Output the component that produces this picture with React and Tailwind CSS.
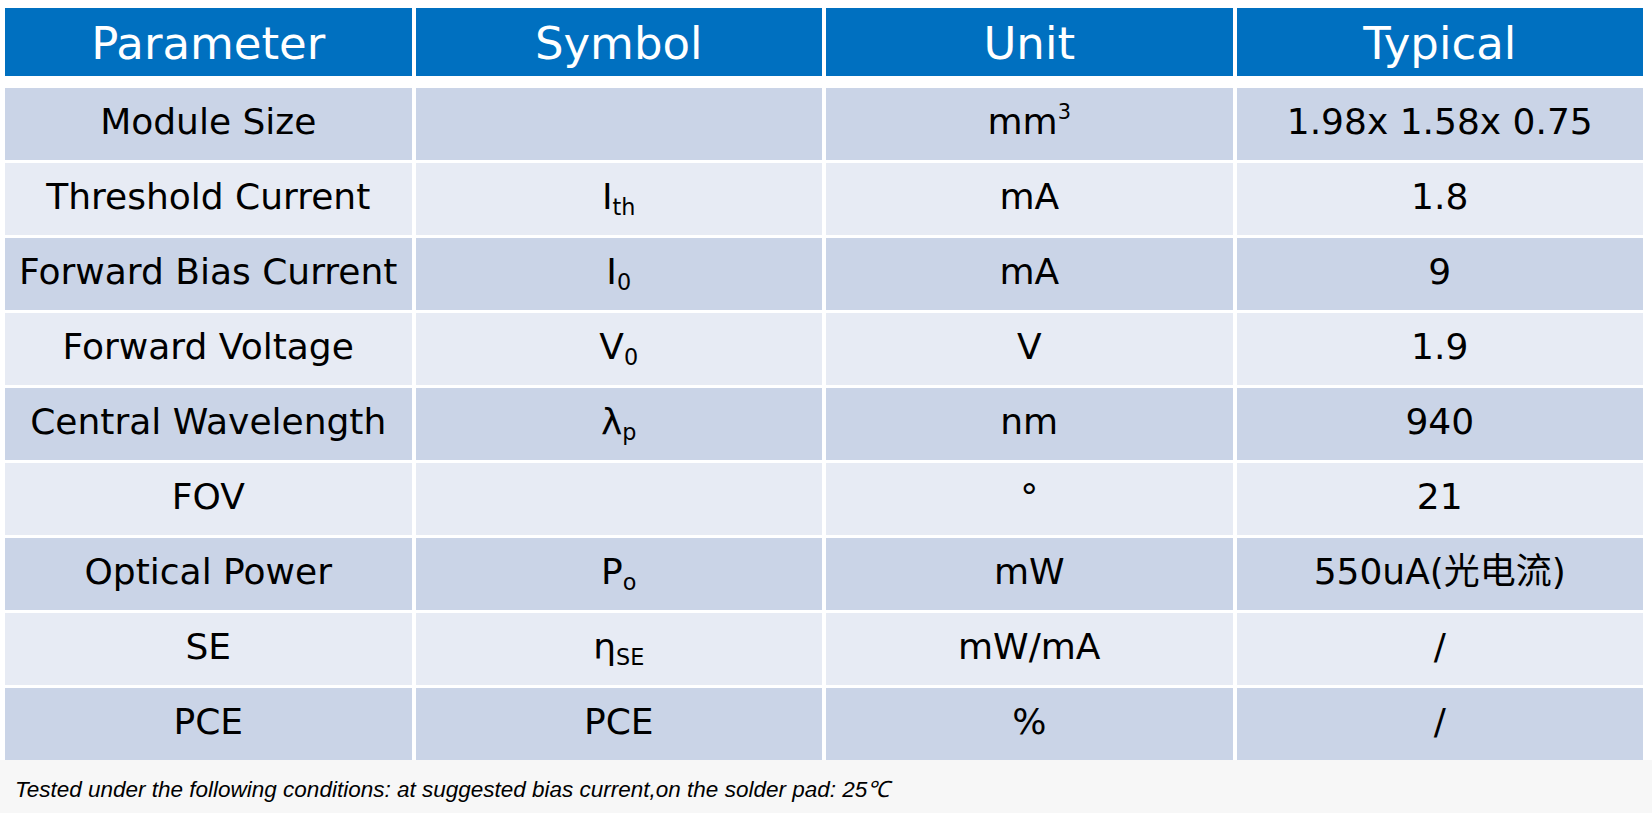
const headers = ["Parameter", "Symbol", "Unit", "Typical"];

const rows = [
  ["Module Size", "", <>mm<sup className="relative -top-[0.7em] text-[0.58em] align-baseline">3</sup></>, "1.98x 1.58x 0.75"],
  ["Threshold Current", <>I<Sub>th</Sub></>, "mA", "1.8"],
  ["Forward Bias Current", <>I<Sub>0</Sub></>, "mA", "9"],
  ["Forward Voltage", <>V<Sub>0</Sub></>, "V", "1.9"],
  ["Central Wavelength", <>λ<Sub>p</Sub></>, "nm", "940"],
  ["FOV", "", "°", "21"],
  ["Optical Power", <>P<Sub>o</Sub></>, "mW", "550uA(光电流)"],
  ["SE", <>η<Sub>SE</Sub></>, "mW/mA", "/"],
  ["PCE", "PCE", "%", "/"],
];

function Sub({ children }) {
  return <span className="relative top-[0.28em] text-[0.62em]">{children}</span>;
}

export default function App() {
  return (
    <div
      className="w-[1652px] h-[813px] bg-white overflow-hidden flex flex-col"
      style={{ fontFamily: '"DejaVu Sans", "Noto Sans CJK SC", sans-serif' }}
    >
      <div className="pl-[5px] pt-[8px] w-[1643px]">
        {/* header */}
        <div className="grid grid-cols-4 gap-x-[4px]">
          {headers.map((h) => (
            <div
              key={h}
              className="h-[68px] pt-[3px] bg-[#0070c0] text-white flex items-center justify-center text-[45px] leading-none"
            >
              {h}
            </div>
          ))}
        </div>

        {/* body */}
        <div className="mt-[12px] flex flex-col gap-y-[3px]">
          {rows.map((r, i) => (
            <div key={i} className="grid grid-cols-4 gap-x-[4px]">
              {r.map((c, j) => (
                <div
                  key={j}
                  className={`h-[72px] pb-[5px] flex items-center justify-center text-[36px] leading-none text-black ${
                    i % 2 === 0 ? "bg-[#cad4e7]" : "bg-[#e7ebf4]"
                  }`}
                >
                  <span>{c}</span>
                </div>
              ))}
            </div>
          ))}
        </div>
      </div>

      <div className="flex-1 bg-[#f7f7f7] pl-[15px] pt-[19px]">
        <p
          className="italic text-[22.5px] leading-none text-black"
          style={{ fontFamily: '"Liberation Sans", Arial, sans-serif' }}
        >
          Tested under the following conditions: at suggested bias current,on the solder pad: 25℃
        </p>
      </div>
    </div>
  );
}
